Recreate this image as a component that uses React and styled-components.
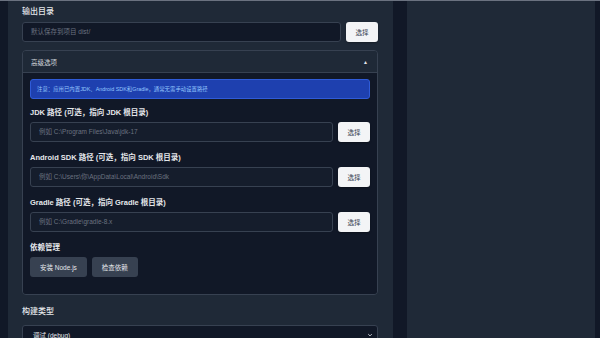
import React from "react";
import styled, { createGlobalStyle } from "styled-components";

const Global = createGlobalStyle`
	html, body {
		margin: 0;
		padding: 0;
		background: #111827;
		overflow: hidden;
	}
	* {
		box-sizing: border-box;
	}
`;

const Page = styled.div`
	height: 338px;
	border-top: 1px solid #6b7280;
	display: grid;
	grid-template-columns: 385px 188px;
	gap: 14px;
	padding: 0 5px 0 8px;
	font-family: "Liberation Sans", "Noto Sans CJK SC", sans-serif;
	color: #e5e7eb;
`;

const Panel = styled.div`
	background: #1f2937;
	padding: ${(p) => (p.$pad ? "5px 15px 0 14px" : "0")};
	overflow: hidden;
`;

const Heading = styled.div`
	font-size: 8px;
	font-weight: 500;
	line-height: 12px;
	color: #e5e7eb;
	margin-top: ${(p) => p.$top || 0}px;
	margin-bottom: ${(p) => p.$bottom || 4}px;
`;

const Row = styled.div`
	display: flex;
	gap: 5px;
`;

const Input = styled.div`
	flex: 1;
	height: 20px;
	border: 1px solid #374151;
	border-radius: 3px;
	background: ${(p) => (p.$dark ? "#111827" : "#151d2c")};
	color: #6b7280;
	font-size: 6.5px;
	line-height: 18px;
	padding-left: 8px;
	white-space: nowrap;
`;

const PickButton = styled.button`
	width: 32px;
	height: 20px;
	border: none;
	border-radius: 3px;
	background: #f3f4f6;
	color: #374151;
	font-family: inherit;
	font-size: 6.5px;
	padding: 0;
	box-shadow: 0 1px 2px rgba(0, 0, 0, 0.3);
`;

const Advanced = styled.div`
	margin-top: 8px;
	border: 1px solid #374151;
	border-radius: 4px;
	overflow: hidden;
`;

const AdvHeader = styled.div`
	height: 22px;
	display: flex;
	align-items: center;
	justify-content: space-between;
	padding: 0 9px 0 8px;
	background: #1f2937;
	border-bottom: 1px solid #374151;
	font-size: 6.5px;
	color: #d1d5db;
`;

const Caret = styled.span`
	font-size: 5px;
	color: #e5e7eb;
`;

const AdvBody = styled.div`
	background: #111827;
	padding: 6px 7px 17px 7px;
`;

const Notice = styled.div`
	height: 20px;
	background: #1e40af;
	border: 1px solid #2f5bd8;
	border-radius: 3px;
	color: #93c5fd;
	font-size: 5.4px;
	line-height: 18px;
	padding-left: 6px;
	margin-bottom: 8px;
	white-space: nowrap;
`;

const Field = styled.div`
	margin-bottom: 10px;
`;

const Label = styled.div`
	font-size: 7.5px;
	font-weight: 700;
	line-height: 12px;
	color: #e5e7eb;
	margin-bottom: 3px;
	white-space: nowrap;
`;

const ActionRow = styled.div`
	display: flex;
	gap: 5px;
	margin-top: 3px;
`;

const GrayButton = styled.button`
	height: 20px;
	padding: 0 10px;
	border: none;
	border-radius: 3px;
	background: #374151;
	color: #e5e7eb;
	font-family: inherit;
	font-size: 6.5px;
`;

const Select = styled.div`
	height: 20px;
	border: 1px solid #374151;
	border-radius: 3px;
	background: #111827;
	display: flex;
	align-items: center;
	justify-content: space-between;
	padding: 0 4px 0 10px;
	font-size: 6.5px;
	color: #e5e7eb;
`;

const fields = [
	{ label: "JDK 路径 (可选，指向 JDK 根目录)", hint: "例如 C:\\Program Files\\Java\\jdk-17" },
	{ label: "Android SDK 路径 (可选，指向 SDK 根目录)", hint: "例如 C:\\Users\\你\\AppData\\Local\\Android\\Sdk" },
	{ label: "Gradle 路径 (可选，指向 Gradle 根目录)", hint: "例如 C:\\Gradle\\gradle-8.x" },
];

const App = () => {
	return (
		<>
			<Global />
			<Page>
				<Panel $pad>
					<Heading>输出目录</Heading>
					<Row>
						<Input $dark>默认保存到项目 dist/</Input>
						<PickButton>选择</PickButton>
					</Row>
					<Advanced>
						<AdvHeader>
							<span>高级选项</span>
							<Caret>▲</Caret>
						</AdvHeader>
						<AdvBody>
							<Notice>注意：应用已内置JDK、Android SDK和Gradle，通常无需手动设置路径</Notice>
							{fields.map((f) => (
								<Field key={f.label}>
									<Label>{f.label}</Label>
									<Row>
										<Input>{f.hint}</Input>
										<PickButton>选择</PickButton>
									</Row>
								</Field>
							))}
							<Label>依赖管理</Label>
							<ActionRow>
								<GrayButton>安装 Node.js</GrayButton>
								<GrayButton>检查依赖</GrayButton>
							</ActionRow>
						</AdvBody>
					</Advanced>
					<Heading $top={11} $bottom={7}>构建类型</Heading>
					<Select>
						<span>调试 (debug)</span>
						<svg width="6" height="6" viewBox="0 0 10 10">
							<path d="M2 3.5 L5 6.5 L8 3.5" stroke="#d1d5db" strokeWidth="1.5" fill="none" />
						</svg>
					</Select>
				</Panel>
				<Panel />
			</Page>
		</>
	);
};

export default App;
